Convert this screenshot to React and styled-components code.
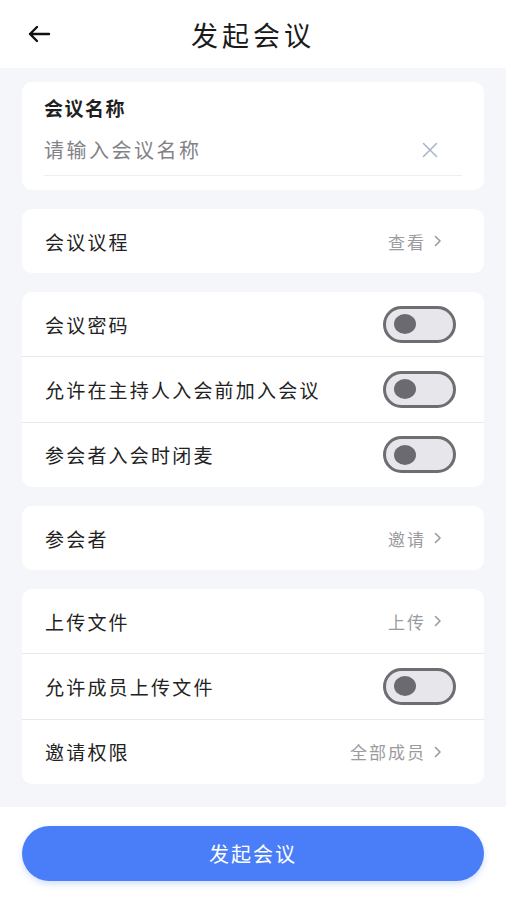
import React, { useState } from "react";
import styled, { createGlobalStyle } from "styled-components";

const GlobalStyle = createGlobalStyle`
  html, body {
    margin: 0;
    padding: 0;
    background: #ffffff;
    font-family: "Noto Sans CJK SC", "Noto Sans", sans-serif;
  }
  * {
    box-sizing: border-box;
  }
`;

const Page = styled.div`
  min-height: 100vh;
  display: flex;
  flex-direction: column;
  background-color: #f5f6fa;
`;

const Header = styled.header`
  height: 68px;
  background-color: #ffffff;
  display: grid;
  grid-template-columns: 80px 1fr 80px;
  align-items: center;
  padding: 0 0 0 27px;

  h1 {
    margin: 0;
    text-align: center;
    font-size: 27px;
    font-weight: 400;
    letter-spacing: 4px;
    color: #1a1a1a;
    margin-left: -27px;
  }
`;

const BackButton = styled.button`
  border: none;
  background: none;
  padding: 0;
  width: 24px;
  height: 24px;
  display: flex;
  align-items: center;
  cursor: pointer;
`;

const Content = styled.main`
  flex: 1;
  display: flex;
  flex-direction: column;
  gap: 19px;
  padding: 14px 22px 23px;
`;

const Card = styled.section`
  background-color: #ffffff;
  border-radius: 10px;
  overflow: hidden;
`;

const NameCard = styled(Card)`
  padding: 14px 22px 14px;

  label {
    display: block;
    font-size: 19px;
    line-height: 24px;
    font-weight: 600;
    letter-spacing: 1.5px;
    color: #1f1f1f;
  }
`;

const InputRow = styled.div`
  margin-top: 8px;
  height: 48px;
  padding-bottom: 4px;
  display: flex;
  align-items: center;
  border-bottom: 1px solid #eeeff2;

  input {
    flex: 1;
    border: none;
    outline: none;
    background: transparent;
    font-family: inherit;
    font-size: 20px;
    letter-spacing: 2.5px;
    color: #333;
    padding: 0;
  }
  input::placeholder {
    color: #838387;
  }
`;

const ClearButton = styled.button`
  border: none;
  background: none;
  padding: 0;
  margin-right: 24px;
  width: 16px;
  height: 16px;
  display: flex;
  align-items: center;
  justify-content: center;
`;

const Row = styled.div`
  height: ${(p) => (p.$divider ? "65.5px" : "64px")};
  display: flex;
  align-items: center;
  justify-content: space-between;
  padding: 0 28px 0 23px;
  border-top: ${(p) => (p.$divider ? "1px solid #e9e9ec" : "none")};
`;

const RowLabel = styled.span`
  font-size: 19px;
  letter-spacing: 2.2px;
  color: #222222;
`;

const RowValue = styled.span`
  display: flex;
  align-items: center;
  gap: 8px;
  font-size: 17px;
  letter-spacing: 2px;
  color: #9b9b9f;
  margin-right: 14px;
`;

const Toggle = styled.button`
  width: 73px;
  height: 37px;
  border-radius: 19px;
  border: 3px solid ${(p) => (p.$on ? "#4a7ef9" : "#6d6d72")};
  background-color: ${(p) => (p.$on ? "#4a7ef9" : "#e6e6eb")};
  padding: 0 8px;
  display: flex;
  align-items: center;
  justify-content: ${(p) => (p.$on ? "flex-end" : "flex-start")};
  cursor: pointer;

  &::after {
    content: "";
    width: 22px;
    height: 20px;
    border-radius: 50%;
    background-color: ${(p) => (p.$on ? "#ffffff" : "#6a6a70")};
  }
`;

const Footer = styled.footer`
  height: 93px;
  background-color: #ffffff;
  padding: 19px 22px 0;
`;

const SubmitButton = styled.button`
  width: 100%;
  height: 55px;
  border: none;
  border-radius: 28px;
  background-color: #4a7ef9;
  box-shadow: 0 3px 6px rgba(74, 126, 249, 0.25);
  color: #ffffff;
  font-family: inherit;
  font-size: 20px;
  letter-spacing: 2px;
  cursor: pointer;
`;

const Chevron = () => (
  <svg width="8" height="12" viewBox="0 0 8 12">
    <polyline
      points="1.5,1.5 6,6 1.5,10.5"
      fill="none"
      stroke="#9b9b9f"
      strokeWidth="1.6"
      strokeLinecap="round"
      strokeLinejoin="round"
    />
  </svg>
);

const LinkRow = ({ label, value, divider }) => (
  <Row $divider={divider}>
    <RowLabel>{label}</RowLabel>
    <RowValue>
      {value}
      <Chevron />
    </RowValue>
  </Row>
);

const SwitchRow = ({ label, divider, on, onToggle }) => (
  <Row $divider={divider}>
    <RowLabel>{label}</RowLabel>
    <Toggle $on={on} onClick={onToggle} aria-label={label} />
  </Row>
);

export default function App() {
  const [name, setName] = useState("");
  const [switches, setSwitches] = useState({
    password: false,
    early: false,
    mute: false,
    upload: false,
  });

  const flip = (key) => setSwitches((s) => ({ ...s, [key]: !s[key] }));

  return (
    <Page>
      <GlobalStyle />
      <Header>
        <BackButton aria-label="返回">
          <svg width="24" height="18" viewBox="0 0 24 18">
            <path
              d="M22 9H3M10 2L3 9l7 7"
              fill="none"
              stroke="#111"
              strokeWidth="2.4"
              strokeLinecap="round"
              strokeLinejoin="round"
            />
          </svg>
        </BackButton>
        <h1>发起会议</h1>
        <span />
      </Header>

      <Content>
        <NameCard>
          <label htmlFor="meeting-name">会议名称</label>
          <InputRow>
            <input
              id="meeting-name"
              placeholder="请输入会议名称"
              value={name}
              onChange={(e) => setName(e.target.value)}
            />
            <ClearButton aria-label="清除" onClick={() => setName("")}>
              <svg width="16" height="16" viewBox="0 0 16 16">
                <path
                  d="M1.5 1.5l13 13M14.5 1.5l-13 13"
                  stroke="#a9b7c9"
                  strokeWidth="1.6"
                  strokeLinecap="round"
                />
              </svg>
            </ClearButton>
          </InputRow>
        </NameCard>

        <Card>
          <LinkRow label="会议议程" value="查看" />
        </Card>

        <Card>
          <SwitchRow label="会议密码" on={switches.password} onToggle={() => flip("password")} />
          <SwitchRow label="允许在主持人入会前加入会议" divider on={switches.early} onToggle={() => flip("early")} />
          <SwitchRow label="参会者入会时闭麦" divider on={switches.mute} onToggle={() => flip("mute")} />
        </Card>

        <Card>
          <LinkRow label="参会者" value="邀请" />
        </Card>

        <Card>
          <LinkRow label="上传文件" value="上传" />
          <SwitchRow label="允许成员上传文件" divider on={switches.upload} onToggle={() => flip("upload")} />
          <LinkRow label="邀请权限" value="全部成员" divider />
        </Card>
      </Content>

      <Footer>
        <SubmitButton>发起会议</SubmitButton>
      </Footer>
    </Page>
  );
}
